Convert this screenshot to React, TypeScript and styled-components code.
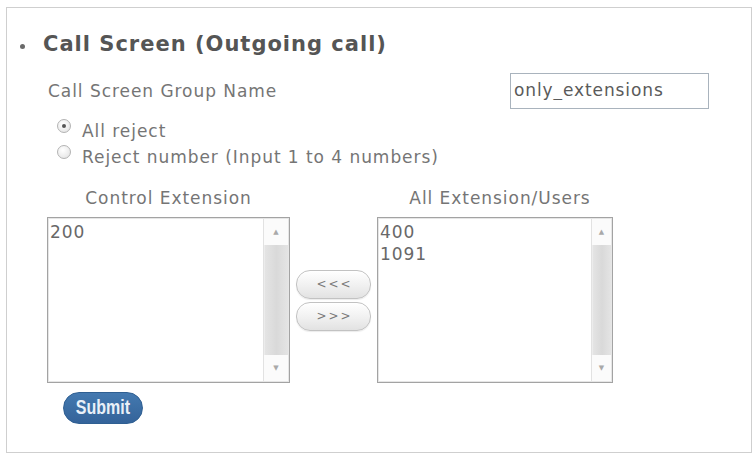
import React from "react";
import styled, { createGlobalStyle } from "styled-components";

//* page defaults
const GlobalStyle = createGlobalStyle`
  html, body {
    margin: 0;
    padding: 0;
    background: #ffffff;
  }
  body {
    font-family: "DejaVu Sans", Verdana, sans-serif;
    color: #6c6c6c;
  }
`;

const controlExtensions = ["200"];
const allExtensions = ["400", "1091"];

const App = () => {
  return (
    <>
      <GlobalStyle />
      <Panel>
        {/* -----TITLE----- */}
        <Title>
          <Bullet />
          Call Screen (Outgoing call)
        </Title>

        <Body>
          {/* -----GROUP NAME----- */}
          <FieldRow>
            <FieldLabel>Call Screen Group Name</FieldLabel>
            <TextInput defaultValue="only_extensions" />
          </FieldRow>

          {/* -----MODE----- */}
          <RadioList>
            <RadioRow>
              <Radio $checked />
              All reject
            </RadioRow>
            <RadioRow>
              <Radio />
              Reject number (Input 1 to 4 numbers)
            </RadioRow>
          </RadioList>

          {/* -----TRANSFER LISTS----- */}
          <Transfer>
            <ColumnHeader>Control Extension</ColumnHeader>
            <span />
            <ColumnHeader $shift={10}>All Extension/Users</ColumnHeader>

            <ListBox $width={243}>
              <ListItems>
                {controlExtensions.map((ext) => (
                  <Item key={ext}>{ext}</Item>
                ))}
              </ListItems>
              <ScrollBar $width={24}>
                <Arrow>▲</Arrow>
                <Track />
                <Arrow>▼</Arrow>
              </ScrollBar>
            </ListBox>

            <MoveButtons>
              <MoveButton>&lt;&lt;&lt;</MoveButton>
              <MoveButton>&gt;&gt;&gt;</MoveButton>
            </MoveButtons>

            <ListBox $width={236}>
              <ListItems>
                {allExtensions.map((ext) => (
                  <Item key={ext}>{ext}</Item>
                ))}
              </ListItems>
              <ScrollBar $width={19}>
                <Arrow>▲</Arrow>
                <Track />
                <Arrow>▼</Arrow>
              </ScrollBar>
            </ListBox>
          </Transfer>

          <SubmitButton>
            <SubmitLabel>Submit</SubmitLabel>
          </SubmitButton>
        </Body>
      </Panel>
    </>
  );
};

//* ----- styled components -----
const Panel = styled.section`
  box-sizing: border-box;
  width: 746px;
  height: 446px;
  margin: 7px 0 0 6px;
  border: 1px solid #cfcfcf;
  padding: 22px 0 0 13px;
`;

const Title = styled.h2`
  display: flex;
  align-items: center;
  margin: 0;
  font-size: 21px;
  line-height: 28px;
  font-weight: bold;
  color: #555555;
  letter-spacing: 1px;
`;

const Bullet = styled.span`
  width: 5px;
  height: 5px;
  border-radius: 50%;
  background: #6a6a6a;
  margin: 4px 18px 0 0;
`;

const Body = styled.div`
  padding-left: 28px;
  font-size: 17px;
  letter-spacing: 0.95px;
`;

const FieldRow = styled.div`
  display: flex;
  align-items: center;
  margin-top: 15px;
`;

const FieldLabel = styled.label`
  width: 462px;
  color: #757575;
`;

const TextInput = styled.input`
  box-sizing: border-box;
  width: 199px;
  height: 36px;
  padding: 0 3px 2px;
  border: 1px solid #a9b3bd;
  font-family: "DejaVu Sans", Verdana, sans-serif;
  font-size: 17px;
  letter-spacing: 0.9px;
  color: #5a5a5a;
  outline: none;
`;

const RadioList = styled.div`
  margin: 9px 0 0 9px;
`;

const RadioRow = styled.label`
  display: flex;
  align-items: flex-start;
  gap: 11px;
  height: 26px;
  line-height: 26px;
  color: #757575;
`;

const Radio = styled.span<{ $checked?: boolean }>`
  position: relative;
  box-sizing: border-box;
  width: 14px;
  height: 14px;
  margin-top: 1px;
  border-radius: 50%;
  border: 1px solid #b3b3b3;
  background: radial-gradient(circle at 40% 35%, #ffffff 0%, #e9e9e9 70%, #d3d3d3 100%);

  &::after {
    content: "";
    display: ${(p) => (p.$checked ? "block" : "none")};
    position: absolute;
    left: 4px;
    top: 4px;
    width: 4px;
    height: 4px;
    border-radius: 50%;
    background: #555555;
  }
`;

const Transfer = styled.div`
  display: grid;
  grid-template-columns: 243px 87px 236px;
  grid-template-rows: 22px 166px;
  row-gap: 8px;
  margin: 17px 0 0 -1px;
`;

const ColumnHeader = styled.div<{ $shift?: number }>`
  text-align: center;
  line-height: 22px;
  color: #757575;
  padding-left: ${(p) => p.$shift ?? 0}px;
`;

const ListBox = styled.div<{ $width: number }>`
  box-sizing: border-box;
  display: flex;
  width: ${(p) => p.$width}px;
  height: 166px;
  border: 1px solid #a3a3a3;
  box-shadow: inset 0 0 0 1px #e6e6e6;
  background: #ffffff;
`;

const ListItems = styled.div`
  flex: 1;
  padding: 3px 2px;
`;

const Item = styled.div`
  line-height: 22px;
  color: #686868;
`;

const ScrollBar = styled.div<{ $width: number }>`
  display: flex;
  flex-direction: column;
  width: ${(p) => p.$width}px;
  margin: 1px 1px 1px 0;
  border-left: 1px solid #e2e2e2;
  background: #f6f6f6;
`;

const Arrow = styled.div`
  height: 26px;
  display: flex;
  align-items: center;
  justify-content: center;
  font-size: 7px;
  letter-spacing: 0;
  color: #a9a9a9;
  background: #fbfbfb;
`;

const Track = styled.div`
  flex: 1;
  background: linear-gradient(to right, #e4e4e4, #d9d9d9 50%, #e4e4e4);
  border-left: 1px solid #ececec;
`;

const MoveButtons = styled.div`
  display: flex;
  flex-direction: column;
  align-items: center;
  justify-content: center;
  gap: 3px;
`;

const MoveButton = styled.button`
  box-sizing: border-box;
  width: 75px;
  height: 29px;
  border: 1px solid #c2c2c2;
  border-radius: 14px;
  background: linear-gradient(#ffffff, #f0f0f0 55%, #e2e2e2);
  box-shadow: inset 0 1px 0 #ffffff, 0 1px 1px rgba(0, 0, 0, 0.08);
  font-family: "DejaVu Sans", Verdana, sans-serif;
  font-size: 12px;
  letter-spacing: 2px;
  color: #7a7a7a;
  padding: 0 0 0 2px;
`;

const SubmitButton = styled.button`
  display: flex;
  align-items: center;
  justify-content: center;
  box-sizing: border-box;
  width: 80px;
  height: 32px;
  margin: 9px 0 0 15px;
  border: 1px solid #2f5f92;
  border-radius: 16px;
  background: linear-gradient(#4479b0, #3a6ca2 60%, #34639a);
  padding: 0 0 1px;
`;

// narrow bold label, as the skin's button font is condensed
const SubmitLabel = styled.span`
  display: inline-block;
  font-family: "Liberation Sans", Arial, sans-serif;
  font-size: 20px;
  font-weight: bold;
  letter-spacing: 0;
  color: #e9f0f8;
  transform: scaleX(0.8);
`;

export default App;
